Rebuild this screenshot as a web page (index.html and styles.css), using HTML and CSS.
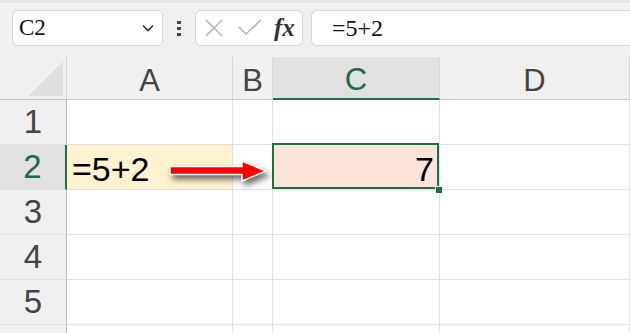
FILE: index.html
```html
<!DOCTYPE html>
<html lang="en">
<head>
    <meta charset="UTF-8">
    <meta name="viewport" content="width=device-width, initial-scale=1.0">
    <title>Formula Result</title>
    <link rel="stylesheet" href="styles.css">
</head>
<body>
    <div class="app">
        <!-- Formula bar -->
        <div class="toolbar">
            <div class="name-box">
                <span>C2</span>
                <svg class="chevron" width="12" height="8" viewBox="0 0 12 8">
                    <path d="M1 1.5 L6 6.5 L11 1.5" fill="none" stroke="#333" stroke-width="1.6"/>
                </svg>
            </div>
            <div class="dots"><i></i><i></i><i></i></div>
            <div class="fx-box">
                <svg width="20" height="20" viewBox="0 0 20 20">
                    <path d="M2 2 L18 18 M18 2 L2 18" stroke="#b4b4b4" stroke-width="1.6"/>
                </svg>
                <svg width="24" height="18" viewBox="0 0 24 18">
                    <path d="M1 8 L8 15 L23 1" fill="none" stroke="#b4b4b4" stroke-width="1.6"/>
                </svg>
                <span class="fx">fx</span>
            </div>
            <div class="formula">=5+2</div>
        </div>

        <!-- Sheet grid -->
        <div class="sheet">
            <div class="corner"></div>
            <div class="col-head">A</div>
            <div class="col-head">B</div>
            <div class="col-head active">C</div>
            <div class="col-head">D</div>

            <div class="row-head">1</div>
            <div class="cell"></div>
            <div class="cell"></div>
            <div class="cell"></div>
            <div class="cell"></div>

            <div class="row-head active">2</div>
            <div class="cell gold">=5+2</div>
            <div class="cell"></div>
            <div class="cell peach selected">7</div>
            <div class="cell"></div>

            <div class="row-head">3</div>
            <div class="cell"></div>
            <div class="cell"></div>
            <div class="cell"></div>
            <div class="cell"></div>

            <div class="row-head">4</div>
            <div class="cell"></div>
            <div class="cell"></div>
            <div class="cell"></div>
            <div class="cell"></div>

            <div class="row-head">5</div>
            <div class="cell"></div>
            <div class="cell"></div>
            <div class="cell"></div>
            <div class="cell"></div>

            <div class="row-head"></div>
            <div class="cell"></div>
            <div class="cell"></div>
            <div class="cell"></div>
            <div class="cell"></div>

            <svg class="arrow" width="120" height="45" viewBox="0 0 120 45">
                <path d="M10 16.5 L82 16.5 L82 11 L106 21 L82 31 L82 24.5 L10 24.5 Z" fill="#ff0000" stroke="#fff" stroke-width="1.5" stroke-linejoin="miter"/>
            </svg>
        </div>
    </div>
</body>
</html>
```

FILE: styles.css
```css
body {
    margin: 0;
    font-family: "Liberation Sans", Arial, sans-serif;
}
.app {
    width: 630px;
    height: 333px;
    overflow: hidden;
    background: #fff;
}
.toolbar {
    height: 57px;
    box-sizing: border-box;
    border-top: 3px solid #e4e4e6;
    background: #f0f0f2;
    display: flex;
    align-items: flex-start;
    padding: 7px 0 0 12px;
}
.name-box, .fx-box, .formula {
    height: 36px;
    box-sizing: border-box;
    background: #fff;
    border: 1px solid #d6d6d6;
    border-radius: 6px;
    display: flex;
    align-items: center;
}
.name-box {
    width: 151px;
    justify-content: space-between;
    padding: 0 8px 0 6px;
    font-family: "Liberation Serif", "Times New Roman", serif;
    font-size: 23px;
    color: #111;
}
.dots {
    width: 32px;
    display: flex;
    flex-direction: column;
    align-items: center;
    gap: 3px;
    padding-top: 11px;
}
.dots i {
    width: 4px;
    height: 3px;
    background: #444;
}
.fx-box {
    width: 108px;
    padding: 0 0 0 8px;
    gap: 14px;
}
.fx {
    font-family: "Liberation Serif", "Times New Roman", serif;
    font-style: italic;
    font-weight: bold;
    font-size: 25px;
    color: #333;
    margin-left: -2px;
}
.formula {
    flex: 1;
    margin-left: 8px;
    border-radius: 6px 0 0 6px;
    border-right: none;
    padding-left: 20px;
    font-family: "Liberation Serif", "Times New Roman", serif;
    font-size: 24px;
    color: #111;
}
.sheet {
    position: relative;
    display: grid;
    grid-template-columns: 67px 166px 40px 167px 190px;
    grid-template-rows: 43px repeat(6, 45px);
}
.corner, .col-head, .row-head, .cell {
    box-sizing: border-box;
    border-right: 1px solid #e1e1e1;
    border-bottom: 1px solid #e1e1e1;
}
.corner {
    background: #f0f0f0 linear-gradient(135deg, transparent 50%, #dedede 50%) no-repeat;
    background-size: 35px 34px;
    background-position: 28px 5px;
    border-right-color: #d4d4d4;
    border-bottom-color: #c8c8c8;
}
.col-head {
    background: #f0f0f0;
    border-right-color: #d8d8d8;
    border-bottom-color: #c8c8c8;
    display: flex;
    justify-content: center;
    align-items: center;
    padding-top: 5px;
    font-size: 31px;
    color: #444;
}
.col-head.active {
    background: #e1e1e1;
    color: #1e6b40;
    border-bottom: 2px solid #1e7145;
}
.row-head {
    background: #f0f0f0;
    border-right-color: #bcbcbc;
    border-bottom-color: #e2e2e2;
    display: flex;
    justify-content: center;
    align-items: center;
    font-size: 33px;
    color: #444;
}
.row-head.active {
    background: #e1e1e1;
    color: #1e6b40;
    border-right: 2px solid #1e7145;
}
.cell {
    display: flex;
    align-items: flex-end;
    padding: 0 5px 0 5px;
    font-size: 34px;
    color: #000;
}
.gold {
    background: #fef2d0;
}
.peach {
    background: #fde4d8;
    justify-content: flex-end;
}
.selected {
    position: relative;
}
.selected::after {
    content: "";
    position: absolute;
    left: -1px;
    top: -2px;
    right: 0;
    bottom: 0;
    border: 2px solid #1e7145;
}
.selected::before {
    content: "";
    position: absolute;
    right: -4px;
    bottom: -5px;
    width: 6px;
    height: 6px;
    background: #1e7145;
    border: 1px solid #fff;
    z-index: 2;
}
.arrow {
    position: absolute;
    left: 160px;
    top: 93px;
    filter: drop-shadow(3px 4px 3px rgba(0, 0, 0, 0.6));
}
```
